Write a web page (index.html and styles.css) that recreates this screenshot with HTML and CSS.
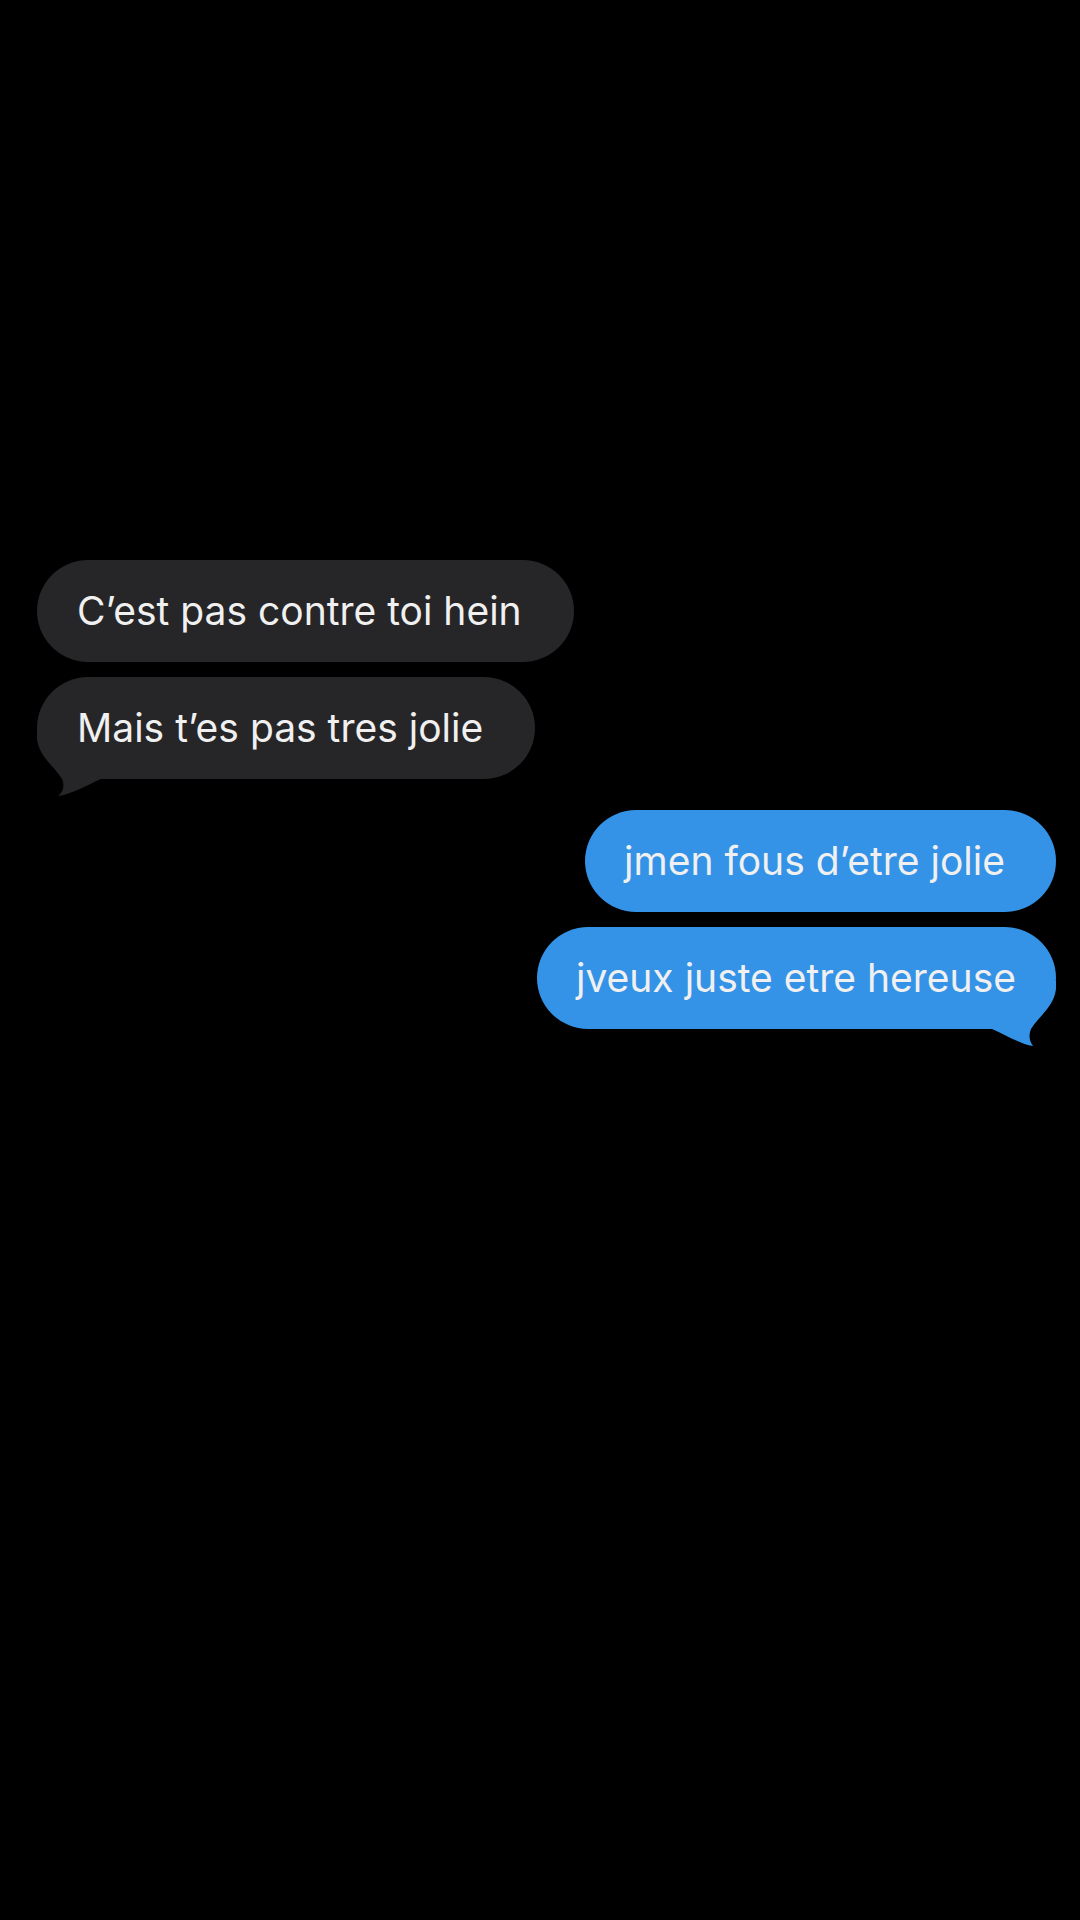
FILE: index.html
```html
<!DOCTYPE html>
<html lang="fr">
<head>
    <meta charset="UTF-8">
    <meta name="viewport" content="width=device-width, initial-scale=1.0">
    <title>Messages</title>
    <link rel="stylesheet" href="styles.css">
</head>
<body>

    <div class="conversation">

        <!-- messages reçus -->
        <div class="group received">
            <div class="bubble"><span class="text">C’est pas contre toi hein</span></div>
            <div class="bubble last">
                <span class="text">Mais t’es pas tres jolie</span>
                <svg class="tail" width="80" height="80" viewBox="0 0 80 80">
                    <path d="M0,12 L0,20 C2,38 18,48 25,60 C28,68 26,73 21,77 C36,75 50,66 64,60 L80,60 L80,12 Z"/>
                </svg>
            </div>
        </div>

        <!-- messages envoyés -->
        <div class="group sent">
            <div class="bubble"><span class="text">jmen fous d’etre jolie</span></div>
            <div class="bubble last">
                <span class="text">jveux juste etre hereuse</span>
                <svg class="tail" width="80" height="80" viewBox="0 0 80 80">
                    <path d="M80,12 L80,20 C78,38 62,48 55,60 C52,68 54,73 57,77 C44,75 30,66 16,60 L0,60 L0,12 Z"/>
                </svg>
            </div>
        </div>

    </div>

</body>
</html>
```

FILE: styles.css
```css
* {
    margin: 0;
    padding: 0;
    box-sizing: border-box;
}

body {
    background-color: #000;
    font-family: Inter, "Noto Sans", sans-serif;
    color: #f0f0f0;
    width: 1080px;
    height: 1920px;
    overflow: hidden;
}

.conversation {
    display: flex;
    flex-direction: column;
    gap: 31px;
    padding: 560px 24px 0 37px;
}

.group {
    display: flex;
    flex-direction: column;
    gap: 15px;
}

.received {
    align-items: flex-start;
}

.sent {
    align-items: flex-end;
}

.bubble {
    position: relative;
    font-size: 39px;
    line-height: 50px;
    padding: 26px 52px 26px 40px;
    border-radius: 51px;
    white-space: nowrap;
}

.bubble .text {
    position: relative;
    z-index: 1;
}

.received .bubble {
    background-color: #262628;
}

.sent .bubble {
    background-color: #3493e6;
    padding: 26px 51px 26px 39px;
}

.sent .bubble.last {
    padding-right: 40px;
}

.tail {
    position: absolute;
    bottom: -20px;
}

.received .tail {
    left: 0;
    fill: #262628;
}

.sent .tail {
    right: 0;
    fill: #3493e6;
}
```
